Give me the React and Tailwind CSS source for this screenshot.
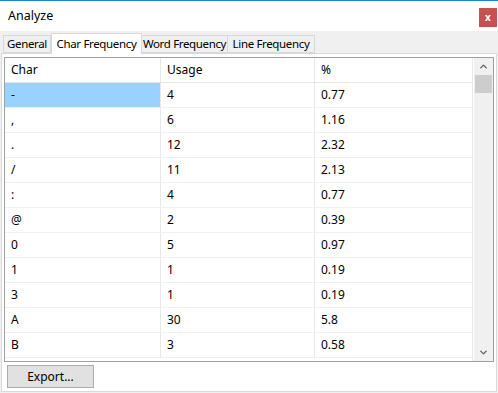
import { ChevronUp, ChevronDown } from "lucide-react";

const rows = [
  ["-", "4", "0.77"],
  [",", "6", "1.16"],
  [".", "12", "2.32"],
  ["/", "11", "2.13"],
  [":", "4", "0.77"],
  ["@", "2", "0.39"],
  ["0", "5", "0.97"],
  ["1", "1", "0.19"],
  ["3", "1", "0.19"],
  ["A", "30", "5.8"],
  ["B", "3", "0.58"],
];

const tabs = [
  ["General", "w-[48px]"],
  ["Char Frequency", "w-[91px]"],
  ["Word Frequency", "w-[87px]"],
  ["Line Frequency", "w-[88px]"],
];

function Cell({ children, w, hl }) {
  return (
    <div
      className={`${w} h-full flex items-center pl-[6px] border-r border-[#e8e8e8] ${
        hl ? "bg-[#99d1ff]" : ""
      }`}
    >
      {children}
    </div>
  );
}

function App() {
  return (
    <div className="w-[498px] h-[393px] overflow-hidden flex flex-col bg-white border-t border-[#1883d7] font-['Noto_Sans',sans-serif] text-[12px] text-black leading-none">
      {/* title bar */}
      <div className="h-[30px] flex items-center justify-between pl-[8px] pr-[1px] bg-white">
        <span className="text-[12.5px] mt-[1px]">Analyze</span>
        <div className="w-[18px] h-[19px] mt-[2px] bg-[#c75050] flex items-center justify-center text-white text-[10px] font-bold">
          x
        </div>
      </div>

      <div className="flex-1 flex flex-col bg-[#f0f0f0] pt-[2px]">
        {/* tabs */}
        <div className="flex items-end h-[20px] pl-[3px] text-[11.5px] tracking-[-0.35px] whitespace-nowrap">
          {tabs.map(([t, w], i) =>
            i === 1 ? (
              <div
                key={t}
                className={`${w} h-[21px] bg-white border border-b-0 border-[#d9d9d9] flex items-center justify-center relative top-[1px] z-10`}
              >
                {t}
              </div>
            ) : (
              <div
                key={t}
                className={`${w} h-[18px] bg-[#f0f0f0] border border-[#d9d9d9] -ml-px first:ml-0 flex items-center justify-center`}
              >
                {t}
              </div>
            )
          )}
        </div>

        {/* tab panel */}
        <div className="flex-1 mx-[1px] mb-[1px] bg-white border border-[#d9d9d9] flex flex-col pt-[3px] px-[2px]">
          <div className="h-[305px] border border-[#a0a0a0] flex">
            {/* grid */}
            <div className="w-[468px] flex flex-col border-r border-[#e8e8e8]">
              <div className="h-[25px] flex border-b border-[#e5e5e5] shrink-0">
                <Cell w="w-[156px]">Char</Cell>
                <Cell w="w-[154px]">Usage</Cell>
                <Cell w="flex-1 border-r-0">%</Cell>
              </div>
              {rows.map((r, i) => (
                <div key={i} className="h-[25px] flex border-b border-[#f0f0f0] shrink-0">
                  <Cell w="w-[156px]" hl={i === 0}>
                    {r[0]}
                  </Cell>
                  <Cell w="w-[154px]">{r[1]}</Cell>
                  <Cell w="flex-1 border-r-0">{r[2]}</Cell>
                </div>
              ))}
            </div>
            {/* scrollbar */}
            <div className="flex-1 ml-[1px] bg-[#f0f0f0] flex flex-col items-center">
              <div className="h-[17px] w-full flex items-center justify-center">
                <ChevronUp size={11} strokeWidth={3} className="text-[#606060]" />
              </div>
              <div className="h-[18px] w-[17px] bg-[#cdcdcd]" />
              <div className="flex-1" />
              <div className="h-[17px] w-full flex items-center justify-center">
                <ChevronDown size={11} strokeWidth={3} className="text-[#606060]" />
              </div>
            </div>
          </div>

          <div className="pt-[3px] pl-[3px]">
            <div className="w-[87px] h-[23px] bg-[#e1e1e1] border border-[#adadad] flex items-center justify-center">
              Export...
            </div>
          </div>
        </div>
      </div>
    </div>
  );
}

export default App;
